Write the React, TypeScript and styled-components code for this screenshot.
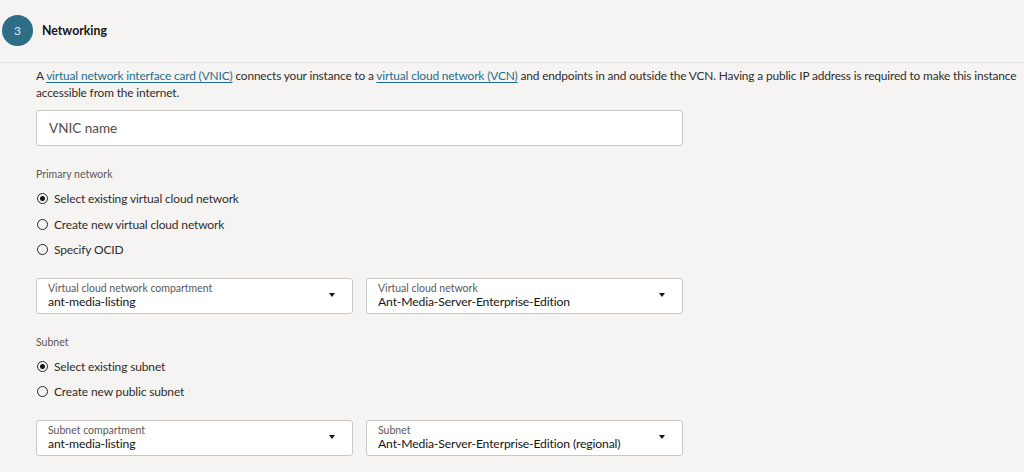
import React from "react";
import styled, { createGlobalStyle } from "styled-components";

const Global = createGlobalStyle`
  html, body { margin: 0; padding: 0; background: #f5f4f2; }
  body { font-family: Lato, "Noto Sans", Arial, sans-serif; color: #312d2a; overflow: hidden; }
  * { box-sizing: border-box; }
`;

const Page = styled.div`
  width: 1024px;
  height: 472px;
  background: #f5f4f2;
  overflow: hidden;
`;

const Header = styled.div`
  display: flex;
  align-items: center;
  gap: 9px;
  height: 63px;
  padding: 0 0 1px 2px;
  border-bottom: 1px solid #e3e1de;
`;

const StepBadge = styled.div`
  width: 31px;
  height: 31px;
  border-radius: 50%;
  background: #2d6d86;
  color: #dfeef3;
  font-size: 12px;
  display: flex;
  align-items: center;
  justify-content: center;
`;

const Title = styled.div`
  font-size: 12.3px;
  font-weight: 700;
  color: #161513;
`;

const Content = styled.div`
  padding: 4px 0 0 36px;
`;

const Intro = styled.p`
  margin: 0;
  font-size: 11.9px;
  letter-spacing: -0.15px;
  line-height: 17px;
  white-space: nowrap;
`;

const Link = styled.a`
  color: #1f6e8c;
  text-decoration: underline;
  text-underline-offset: 2px;
  text-decoration-thickness: 1px;
`;

const Form = styled.div`
  width: 647px;
  display: flex;
  flex-direction: column;
`;

const TextInput = styled.div`
  margin-top: 9px;
  height: 36px;
  background: #fff;
  border: 1px solid #c9c7c4;
  border-radius: 3px;
  display: flex;
  align-items: center;
  padding-left: 12px;
  font-size: 13.5px;
  color: #4f4c49;
`;

const GroupLabel = styled.div<{ $top: number }>`
  margin-top: ${(p) => p.$top}px;
  font-size: 10.5px;
  line-height: 16px;
  color: #5b5854;
`;

const RadioList = styled.div`
  margin-top: 4px;
  display: flex;
  flex-direction: column;
`;

const RadioRow = styled.label`
  display: flex;
  align-items: center;
  gap: 6px;
  height: 25.5px;
  font-size: 12px;
  letter-spacing: -0.15px;
  color: #312d2a;
  padding-left: 1px;
`;

const RadioMark = styled.span<{ $checked?: boolean }>`
  width: 11px;
  height: 11px;
  border-radius: 50%;
  border: 1.3px solid #2a2725;
  display: flex;
  align-items: center;
  justify-content: center;
  &::after {
    content: "";
    width: 5px;
    height: 5px;
    border-radius: 50%;
    background: ${(p) => (p.$checked ? "#161513" : "transparent")};
  }
`;

const SelectRow = styled.div`
  margin-top: 15px;
  display: grid;
  grid-template-columns: 1fr 1fr;
  gap: 13px;
`;

const SelectBox = styled.div`
  height: 36px;
  background: #fff;
  border: 1px solid #c9c7c4;
  border-radius: 3px;
  display: flex;
  align-items: center;
  padding: 0 17px 0 11px;
`;

const SelectText = styled.div`
  flex: 1;
  display: flex;
  flex-direction: column;
  padding-top: 1px;
`;

const SelectLabel = styled.div`
  font-size: 10.5px;
  line-height: 12px;
  color: #5b5854;
`;

const SelectValue = styled.div`
  font-size: 12.2px;
  letter-spacing: -0.15px;
  line-height: 16px;
  color: #161513;
`;

const Caret = styled.span`
  width: 0;
  height: 0;
  border-left: 3.5px solid transparent;
  border-right: 3.5px solid transparent;
  border-top: 4px solid #161513;
  margin-top: -2px;
`;

const Select = ({ label, value }: { label: string; value: string }) => (
  <SelectBox>
    <SelectText>
      <SelectLabel>{label}</SelectLabel>
      <SelectValue>{value}</SelectValue>
    </SelectText>
    <Caret />
  </SelectBox>
);

const Radio = ({ checked, children }: { checked?: boolean; children: React.ReactNode }) => (
  <RadioRow>
    <RadioMark $checked={checked} />
    {children}
  </RadioRow>
);

export default function App() {
  return (
    <Page>
      <Global />
      <Header>
        <StepBadge>3</StepBadge>
        <Title>Networking</Title>
      </Header>
      <Content>
        <Intro>
          A <Link>virtual network interface card (VNIC)</Link> connects your instance to a{" "}
          <Link>virtual cloud network (VCN)</Link> and endpoints in and outside the VCN. Having a public IP
          address is required to make this instance
          <br />
          accessible from the internet.
        </Intro>
        <Form>
          <TextInput>VNIC name</TextInput>
          <GroupLabel $top={20}>Primary network</GroupLabel>
          <RadioList>
            <Radio checked>Select existing virtual cloud network</Radio>
            <Radio>Create new virtual cloud network</Radio>
            <Radio>Specify OCID</Radio>
          </RadioList>
          <SelectRow>
            <Select label="Virtual cloud network compartment" value="ant-media-listing" />
            <Select label="Virtual cloud network" value="Ant-Media-Server-Enterprise-Edition" />
          </SelectRow>
          <GroupLabel $top={20}>Subnet</GroupLabel>
          <RadioList>
            <Radio checked>Select existing subnet</Radio>
            <Radio>Create new public subnet</Radio>
          </RadioList>
          <SelectRow>
            <Select label="Subnet compartment" value="ant-media-listing" />
            <Select label="Subnet" value="Ant-Media-Server-Enterprise-Edition (regional)" />
          </SelectRow>
        </Form>
      </Content>
    </Page>
  );
}
